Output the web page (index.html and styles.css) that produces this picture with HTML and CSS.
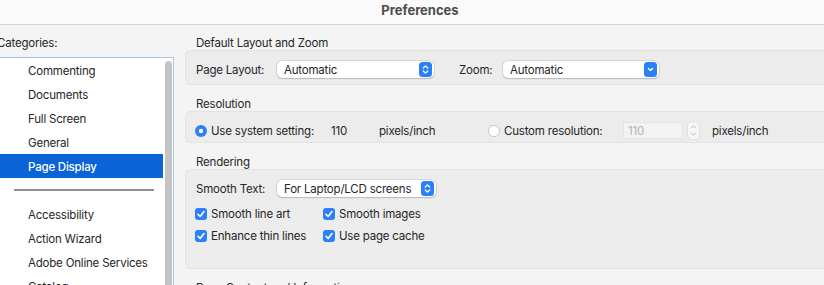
FILE: index.html
```html
<!DOCTYPE html>
<html>
<head>
<meta charset="utf-8">
<title>Preferences</title>
<link rel="stylesheet" href="styles.css">
</head>
<body>
<div class="window">
  <header class="titlebar">Preferences</header>
  <div class="main">
    <aside class="sidebar">
      <div class="cat-label">Categories:</div>
      <div class="listbox">
        <ul class="items">
          <li class="item">Commenting</li>
          <li class="item">Documents</li>
          <li class="item">Full Screen</li>
          <li class="item">General</li>
          <li class="item selected">Page Display</li>
          <li class="sep"><span class="sep-line"></span></li>
          <li class="item">Accessibility</li>
          <li class="item">Action Wizard</li>
          <li class="item">Adobe Online Services</li>
          <li class="item">Catalog</li>
        </ul>
        <div class="track"><div class="thumb"></div></div>
      </div>
    </aside>

    <section class="panel">
      <div class="group">
        <div class="group-label">Default Layout and Zoom</div>
        <div class="box box-layout">
          <div class="row">
            <span class="field-label">Page Layout:</span>
            <div class="popup popup-layout">
              <span class="popup-text">Automatic</span>
              <svg class="popup-btn" width="13" height="15" viewBox="0 0 13 15"><rect width="13" height="15" rx="3.5" fill="#2a80f7"/><path d="M4.3 6 L6.5 3.9 L8.7 6 M4.3 9 L6.5 11.1 L8.7 9" stroke="#fff" stroke-width="1.3" fill="none" stroke-linecap="round" stroke-linejoin="round"/></svg>
            </div>
            <span class="zoom-label">Zoom:</span>
            <div class="popup popup-zoom">
              <span class="popup-text">Automatic</span>
              <svg class="popup-btn" width="13" height="15" viewBox="0 0 13 15"><rect width="13" height="15" rx="3.5" fill="#2a80f7"/><path d="M4.4 6.4 L6.5 8.5 L8.6 6.4" stroke="#fff" stroke-width="1.4" fill="none" stroke-linecap="round" stroke-linejoin="round"/></svg>
            </div>
          </div>
        </div>
      </div>

      <div class="group">
        <div class="group-label">Resolution</div>
        <div class="box box-res">
          <div class="row">
            <svg class="radio" width="12" height="12" viewBox="0 0 12 12"><circle cx="6" cy="6" r="6" fill="#2a80f7"/><circle cx="6" cy="6" r="2.2" fill="#fff"/></svg>
            <span class="res-sys">Use system setting:</span>
            <span class="res-val">110</span>
            <span class="res-unit1">pixels/inch</span>
            <svg class="radio" width="12" height="12" viewBox="0 0 12 12"><circle cx="6" cy="6" r="5.6" fill="#fff" stroke="#bdbdbd" stroke-width="0.8"/></svg>
            <span class="res-custom">Custom resolution:</span>
            <div class="textfield">110</div>
            <svg class="stepper" width="13" height="19" viewBox="0 0 13 19"><rect x="0.5" y="0.5" width="12" height="18" rx="4" fill="#f6f6f6" stroke="#e0e0e0"/><path d="M4.2 7 L6.5 4.7 L8.8 7 M4.2 12 L6.5 14.3 L8.8 12" stroke="#bcbcbc" stroke-width="1" fill="none" stroke-linecap="round" stroke-linejoin="round"/></svg>
            <span class="res-unit2">pixels/inch</span>
          </div>
        </div>
      </div>

      <div class="group">
        <div class="group-label">Rendering</div>
        <div class="box box-render">
          <div class="row">
            <span class="field-label">Smooth Text:</span>
            <div class="popup popup-text-sel">
              <span class="popup-text">For Laptop/LCD screens</span>
              <svg class="popup-btn" width="13" height="15" viewBox="0 0 13 15"><rect width="13" height="15" rx="3.5" fill="#2a80f7"/><path d="M4.3 6 L6.5 3.9 L8.7 6 M4.3 9 L6.5 11.1 L8.7 9" stroke="#fff" stroke-width="1.3" fill="none" stroke-linecap="round" stroke-linejoin="round"/></svg>
            </div>
          </div>
          <div class="checks">
            <label class="check"><svg width="12" height="12" viewBox="0 0 12 12"><rect width="12" height="12" rx="3" fill="#2a80f7"/><path d="M3 6.3 L5.1 8.5 L9 3.6" stroke="#fff" stroke-width="1.6" fill="none" stroke-linecap="round" stroke-linejoin="round"/></svg><span>Smooth line art</span></label>
            <label class="check"><svg width="12" height="12" viewBox="0 0 12 12"><rect width="12" height="12" rx="3" fill="#2a80f7"/><path d="M3 6.3 L5.1 8.5 L9 3.6" stroke="#fff" stroke-width="1.6" fill="none" stroke-linecap="round" stroke-linejoin="round"/></svg><span>Smooth images</span></label>
            <label class="check"><svg width="12" height="12" viewBox="0 0 12 12"><rect width="12" height="12" rx="3" fill="#2a80f7"/><path d="M3 6.3 L5.1 8.5 L9 3.6" stroke="#fff" stroke-width="1.6" fill="none" stroke-linecap="round" stroke-linejoin="round"/></svg><span>Enhance thin lines</span></label>
            <label class="check"><svg width="12" height="12" viewBox="0 0 12 12"><rect width="12" height="12" rx="3" fill="#2a80f7"/><path d="M3 6.3 L5.1 8.5 L9 3.6" stroke="#fff" stroke-width="1.6" fill="none" stroke-linecap="round" stroke-linejoin="round"/></svg><span>Use page cache</span></label>
          </div>
        </div>
      </div>

      <div class="group">
        <div class="group-label">Page Content and Information</div>
      </div>
    </section>
  </div>
</div>
</body>
</html>
```

FILE: styles.css
```css
* { box-sizing: border-box; }
html, body {
  margin: 0;
  padding: 0;
  background: #f4f4f4;
}
body {
  font-family: "Inter", "Liberation Sans", sans-serif;
  font-size: 11.5px;
  letter-spacing: -0.2px;
  color: #262626;
  overflow: hidden;
}
.window {
  width: 824px;
  height: 285px;
  overflow: hidden;
  display: flex;
  flex-direction: column;
}
.titlebar {
  height: 25px;
  flex: none;
  background: #fafafa;
  border-bottom: 1px solid #d6d6d6;
  text-align: center;
  padding-left: 16px;
  font-size: 13px;
  letter-spacing: 0;
  font-weight: 700;
  color: #4d4d4d;
  line-height: 21px;
}
.main {
  flex: 1;
  display: flex;
  min-height: 0;
}
.sidebar {
  flex: none;
  width: 174px;
  display: flex;
  flex-direction: column;
  padding-top: 11px;
}
.cat-label {
  height: 14px;
  line-height: 15px;
  margin-left: -3px;
  white-space: nowrap;
}
.listbox {
  margin-top: 7px;
  flex: 1;
  display: flex;
  background: #fff;
  border-top: 1px solid #a9c5e6;
  border-right: 1px solid #a9c5e6;
}
.items {
  list-style: none;
  margin: 0;
  padding: 0;
  width: 163px;
  flex: none;
}
.item {
  height: 24px;
  line-height: 24px;
  padding-top: 1px;
  padding-left: 28px;
  white-space: nowrap;
}
.item.selected {
  background: #0b63d8;
  color: #fff;
  font-weight: 500;
}
.sep {
  height: 24px;
  display: flex;
  align-items: center;
  padding-left: 14px;
}
.sep-line {
  display: block;
  width: 140px;
  height: 2px;
  background: #909090;
}
.track {
  flex: 1;
  padding: 3px 1px 0 2px;
}
.thumb {
  width: 7px;
  height: 400px;
  border-radius: 4px;
  background: #c4c4c4;
}
.panel {
  flex: 1;
  padding-top: 11px;
  padding-left: 11px;
  min-width: 0;
}
.group {
  margin-bottom: 12px;
}
.group-label {
  height: 14px;
  line-height: 15px;
  padding-left: 11px;
  white-space: nowrap;
}
.box {
  background: #ececec;
  border: 1px solid #e2e2e2;
  border-right: none;
  border-radius: 6px 0 0 6px;
  margin-right: -10px;
  padding-left: 10px;
}
.row {
  display: flex;
  align-items: center;
  white-space: nowrap;
}
.box-layout {
  height: 35px;
  padding-top: 10px;
}
.box-layout .row,
.box-render .row {
  height: 17px;
}
.field-label {
  width: 81px;
  flex: none;
  padding-top: 1px;
}
.popup {
  height: 17px;
  background: #fff;
  border-radius: 5px;
  box-shadow: 0 0 0 0.5px rgba(0, 0, 0, 0.18), 0 1px 1.5px rgba(0, 0, 0, 0.14);
  display: flex;
  align-items: center;
  padding-left: 7px;
  padding-right: 2px;
  flex: none;
}
.popup-text {
  flex: 1;
}
.popup-btn {
  display: block;
  flex: none;
}
.popup-layout { width: 157px; }
.popup-zoom { width: 156px; }
.popup-text-sel { width: 159px; }
.zoom-label {
  margin-left: 25px;
  width: 44px;
  flex: none;
  padding-top: 1px;
}
.box-res {
  height: 32px;
  padding-top: 9px;
  padding-left: 9px;
}
.box-res .row { height: 19px; }
.radio {
  display: block;
  flex: none;
  margin-right: 4px;
}
.res-sys { width: 120px; flex: none; }
.res-val { width: 48px; flex: none; }
.res-unit1 { width: 109px; flex: none; }
.res-custom { width: 119px; flex: none; }
.textfield {
  width: 60px;
  height: 17px;
  line-height: 16px;
  background: #f3f3f3;
  border: 1px solid #e4e4e4;
  color: #b4b4b4;
  padding-left: 4px;
  flex: none;
}
.stepper {
  display: block;
  flex: none;
  margin-left: 4px;
  margin-right: 12px;
}
.box-render {
  height: 100px;
  padding-top: 10px;
}
.checks {
  display: grid;
  grid-template-columns: 128px auto;
  grid-auto-rows: 22px;
  margin-top: 6px;
  margin-left: -1px;
}
.check {
  display: flex;
  align-items: center;
  white-space: nowrap;
}
.check svg {
  display: block;
  flex: none;
  margin-right: 4px;
}
```
